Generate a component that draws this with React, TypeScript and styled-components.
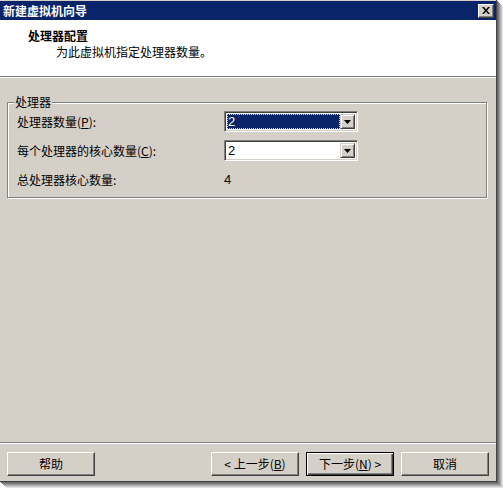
import React from "react";
import styled, { createGlobalStyle } from "styled-components";

const GlobalStyle = createGlobalStyle`
  html, body {
    margin: 0;
    padding: 0;
    background: #ffffff;
  }
  body {
    font-family: "Noto Sans CJK SC", "Liberation Sans", sans-serif;
    font-size: 12px;
    color: #000000;
  }
`;

const Frame = styled.div`
  width: 503px;
  height: 489px;
  overflow: hidden;
  background: #ffffff;
`;

const Window = styled.div`
  width: 497px;
  height: 482px;
  display: flex;
  flex-direction: column;
  background: #d4d0c8;
  border-right: 1px solid #404040;
  border-bottom: 1px solid #404040;
  box-sizing: border-box;
  box-shadow: 1px 1px 0 #6a6a6a, 2px 2px 0 #7c7c7c, 3px 3px 0 #959595, 4px 4px 0 #b0b0b0, 5px 5px 0 #cacaca, 6px 6px 0 #e4e4e4;
`;

const TitleBar = styled.div`
  margin-top: 1px;
  height: 19px;
  background: #0a246a;
  display: flex;
  align-items: center;
  justify-content: space-between;
  padding: 0 2px 0 3px;
  flex-shrink: 0;
`;

const TitleText = styled.span`
  color: #ffffff;
  font-weight: bold;
  font-size: 12px;
  line-height: 14px;
`;

const CloseButton = styled.div`
  width: 16px;
  height: 14px;
  box-sizing: border-box;
  background: #d4d0c8;
  border-top: 1px solid #ffffff;
  border-left: 1px solid #ffffff;
  border-right: 1px solid #404040;
  border-bottom: 1px solid #404040;
  box-shadow: inset -1px -1px 0 #808080;
  display: flex;
  align-items: center;
  justify-content: center;
`;

const Header = styled.div`
  height: 57px;
  background: #ffffff;
  padding: 9px 0 0 28px;
  box-sizing: border-box;
  flex-shrink: 0;
  border-bottom: 1px solid #808080;
  box-shadow: 0 1px 0 #ffffff;
`;

const HeaderTitle = styled.div`
  font-weight: bold;
  line-height: 14px;
`;

const HeaderSub = styled.div`
  margin: 2px 0 0 28px;
  line-height: 14px;
`;

const Body = styled.div`
  flex: 1;
  padding: 18px 9px 0 7px;
`;

const GroupBox = styled.fieldset`
  margin: 0;
  padding: 2px 9px 7px 9px;
  border: 1px solid #808080;
  box-shadow: 1px 1px 0 #ffffff, inset 1px 1px 0 #ffffff;
  display: flex;
  flex-direction: column;
  gap: 8px;
  min-width: 0;
`;

const Legend = styled.legend`
  padding: 0 1px;
  margin-left: -3px;
  line-height: 14px;
  background: #d4d0c8;
`;

const Row = styled.div`
  display: flex;
  align-items: center;
  height: 21px;
`;

const Label = styled.span`
  width: 207px;
  line-height: 14px;
`;

const Combo = styled.div`
  width: 134px;
  height: 21px;
  box-sizing: border-box;
  background: #ffffff;
  border-top: 1px solid #808080;
  border-left: 1px solid #808080;
  border-right: 1px solid #ffffff;
  border-bottom: 1px solid #ffffff;
  box-shadow: inset 1px 1px 0 #404040, inset -1px -1px 0 #d4d0c8;
  display: flex;
  padding: 2px;
`;

const ComboValue = styled.div<{ selected?: boolean }>`
  flex: 1;
  background: ${(p) => (p.selected ? "#0a246a" : "#ffffff")};
  color: ${(p) => (p.selected ? "#ffffff" : "#000000")};
  outline: ${(p) => (p.selected ? "1px dotted #e0d890" : "none")};
  outline-offset: -1px;
  line-height: 15px;
  padding-left: 1px;
  font-family: "Liberation Sans", sans-serif;
  font-size: 13px;
`;

const ComboButton = styled.div`
  width: 15px;
  box-sizing: border-box;
  background: #d4d0c8;
  border-top: 1px solid #d4d0c8;
  border-left: 1px solid #d4d0c8;
  border-right: 1px solid #404040;
  border-bottom: 1px solid #404040;
  box-shadow: inset 1px 1px 0 #ffffff, inset -1px -1px 0 #808080;
  display: flex;
  align-items: center;
  justify-content: center;
`;

const Value = styled.span`
  font-family: "Liberation Sans", sans-serif;
  font-size: 13px;
`;

const Footer = styled.div`
  flex-shrink: 0;
  border-top: 1px solid #808080;
  box-shadow: inset 0 1px 0 #ffffff;
  height: 39px;
  padding: 9px 7px 0 7px;
  box-sizing: border-box;
  display: flex;
  align-items: flex-start;
`;

const Button = styled.div<{ isDefault?: boolean }>`
  width: 88px;
  height: 24px;
  box-sizing: border-box;
  background: #d4d0c8;
  display: flex;
  align-items: center;
  justify-content: center;
  line-height: 14px;
  border: 1px solid;
  border-color: ${(p) => (p.isDefault ? "#000000" : "#ffffff #404040 #404040 #ffffff")};
  box-shadow: ${(p) =>
    p.isDefault
      ? "inset 1px 1px 0 #ffffff, inset -1px -1px 0 #404040, inset -2px -2px 0 #808080"
      : "inset -1px -1px 0 #808080"};
`;

const Spacer = styled.div`
  flex: 1;
`;

const ButtonGap = styled.div`
  width: 7px;
`;

const Underlined = styled.span`
  text-decoration: underline;
`;

const Arrow = () => (
  <svg width="7" height="4" viewBox="0 0 7 4">
    <path d="M0 0h7L3.5 4z" fill="#000" />
  </svg>
);

const CloseIcon = () => (
  <svg width="8" height="7" viewBox="0 0 8 7">
    <path d="M0 0h2l2 2.5L6 0h2L5 3.5 8 7H6L4 4.5 2 7H0l3-3.5z" fill="#000" />
  </svg>
);

export default function App() {
  return (
    <Frame>
      <GlobalStyle />
      <Window>
        <TitleBar>
          <TitleText>新建虚拟机向导</TitleText>
          <CloseButton>
            <CloseIcon />
          </CloseButton>
        </TitleBar>
        <Header>
          <HeaderTitle>处理器配置</HeaderTitle>
          <HeaderSub>为此虚拟机指定处理器数量。</HeaderSub>
        </Header>
        <Body>
          <GroupBox>
            <Legend>处理器</Legend>
            <Row>
              <Label>
                处理器数量(<Underlined>P</Underlined>):
              </Label>
              <Combo>
                <ComboValue selected>2</ComboValue>
                <ComboButton>
                  <Arrow />
                </ComboButton>
              </Combo>
            </Row>
            <Row>
              <Label>
                每个处理器的核心数量(<Underlined>C</Underlined>):
              </Label>
              <Combo>
                <ComboValue>2</ComboValue>
                <ComboButton>
                  <Arrow />
                </ComboButton>
              </Combo>
            </Row>
            <Row>
              <Label>总处理器核心数量:</Label>
              <Value>4</Value>
            </Row>
          </GroupBox>
        </Body>
        <Footer>
          <Button>帮助</Button>
          <Spacer />
          <Button>
            &lt; 上一步(<Underlined>B</Underlined>)
          </Button>
          <ButtonGap />
          <Button isDefault>
            下一步(<Underlined>N</Underlined>) &gt;
          </Button>
          <ButtonGap />
          <Button>取消</Button>
        </Footer>
      </Window>
    </Frame>
  );
}
